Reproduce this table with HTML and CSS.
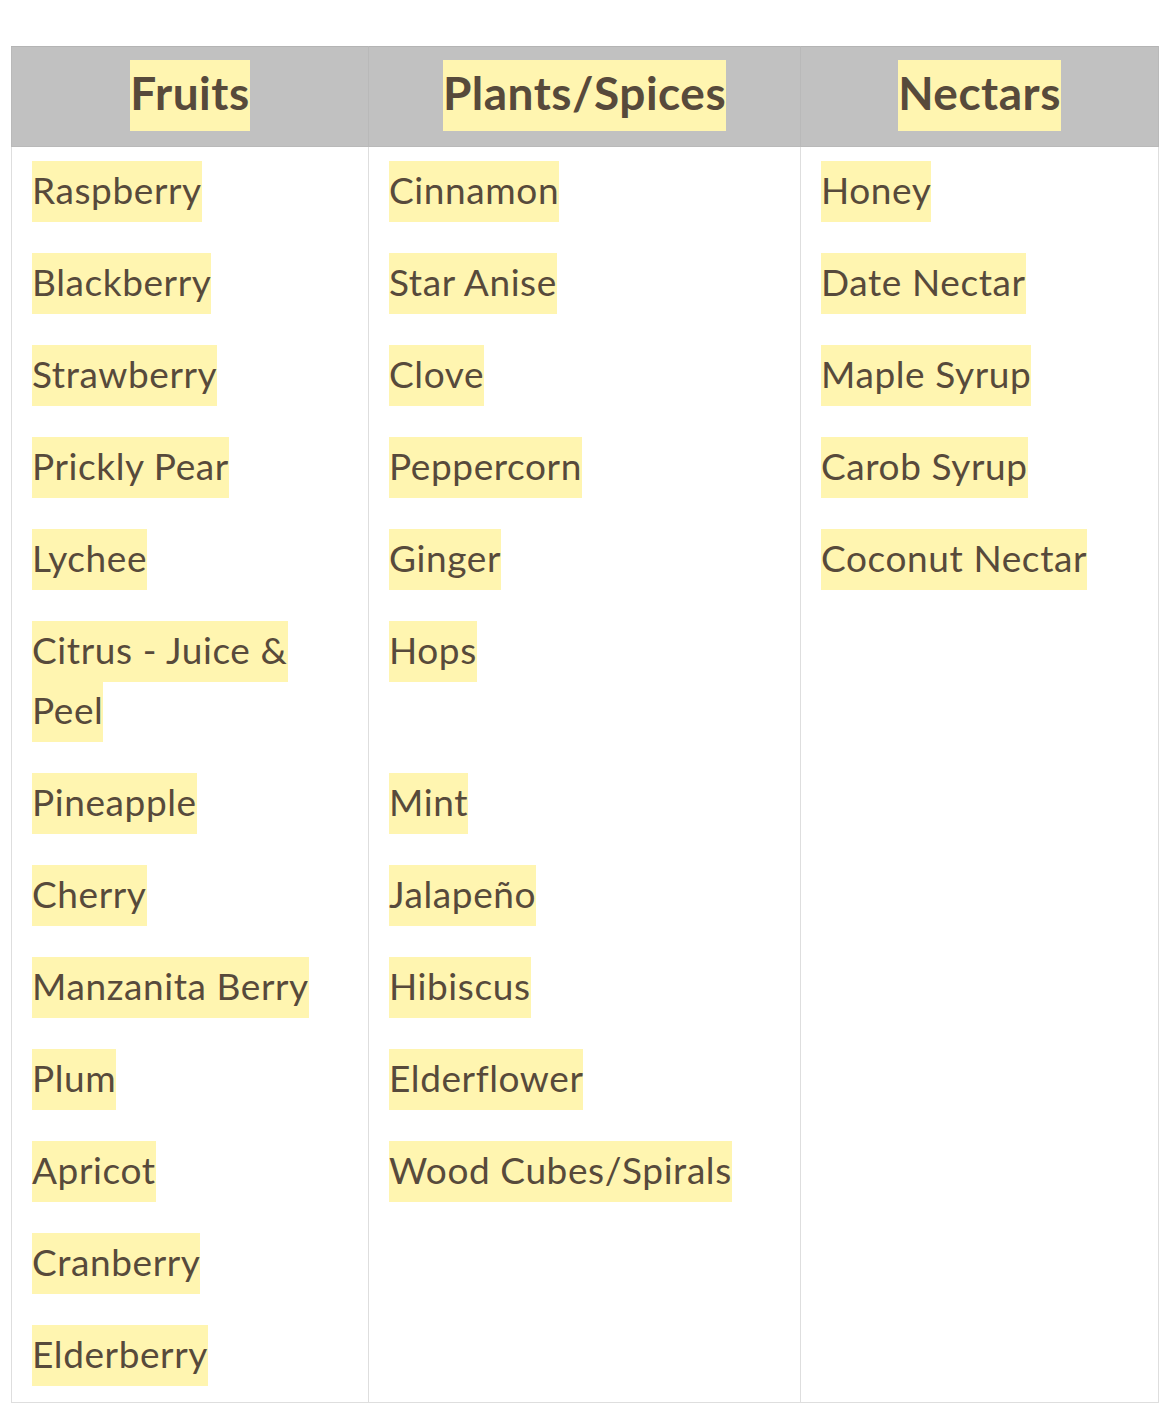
FILE: index.html
```html
<!DOCTYPE html>
<html>
<head>
<meta charset="utf-8">
<link rel="stylesheet" href="styles.css">
</head>
<body>
<table class="grid">
  <colgroup>
    <col class="c1"><col class="c2"><col class="c3">
  </colgroup>
  <thead>
    <tr><th><span class="hl">Fruits</span></th><th><span class="hl">Plants/Spices</span></th><th><span class="hl">Nectars</span></th></tr>
  </thead>
  <tbody>
    <tr><td><span class="hl">Raspberry</span></td><td><span class="hl">Cinnamon</span></td><td><span class="hl">Honey</span></td></tr>
    <tr><td><span class="hl">Blackberry</span></td><td><span class="hl">Star Anise</span></td><td><span class="hl">Date Nectar</span></td></tr>
    <tr><td><span class="hl">Strawberry</span></td><td><span class="hl">Clove</span></td><td><span class="hl">Maple Syrup</span></td></tr>
    <tr><td><span class="hl">Prickly Pear</span></td><td><span class="hl">Peppercorn</span></td><td><span class="hl">Carob Syrup</span></td></tr>
    <tr><td><span class="hl">Lychee</span></td><td><span class="hl">Ginger</span></td><td><span class="hl">Coconut Nectar</span></td></tr>
    <tr><td><span class="hl">Citrus - Juice &amp; Peel</span></td><td><span class="hl">Hops</span></td><td></td></tr>
    <tr><td><span class="hl">Pineapple</span></td><td><span class="hl">Mint</span></td><td></td></tr>
    <tr><td><span class="hl">Cherry</span></td><td><span class="hl">Jalapeño</span></td><td></td></tr>
    <tr><td><span class="hl">Manzanita Berry</span></td><td><span class="hl">Hibiscus</span></td><td></td></tr>
    <tr><td><span class="hl">Plum</span></td><td><span class="hl">Elderflower</span></td><td></td></tr>
    <tr><td><span class="hl">Apricot</span></td><td><span class="hl">Wood Cubes/Spirals</span></td><td></td></tr>
    <tr><td><span class="hl">Cranberry</span></td><td></td><td></td></tr>
    <tr><td><span class="hl">Elderberry</span></td><td></td><td></td></tr>
  </tbody>
</table>
</body>
</html>
```
FILE: styles.css
```css
html, body {
  margin: 0;
  padding: 0;
  background: #ffffff;
}

body {
  padding: 46px 11px 0 11px;
  font-family: "Lato", "Noto Sans", sans-serif;
  color: #574a3b;
}

.grid {
  border-collapse: collapse;
  table-layout: fixed;
  width: 1147px;
}

.c1 { width: 357px; }
.c2 { width: 432px; }
.c3 { width: 358px; }

.grid th {
  background: #c1c1c1;
  border: 1px solid #b9b9b9;
  border-top-color: #b4b4b4;
  padding: 10px 0 17px 0;
  text-align: center;
  font-size: 46px;
  font-weight: 700;
  line-height: 72px;
  letter-spacing: 0.5px;
  vertical-align: top;
}

.grid th .hl {
  padding: 5px 0 11px 0;
}

.grid td {
  border-left: 1px solid #dedede;
  border-right: 1px solid #dedede;
  border-top: 1px solid #ffffff;
  padding: 13px 20px 18px 20px;
  font-size: 37px;
  font-weight: 400;
  line-height: 60px;
  letter-spacing: 0.6px;
  vertical-align: top;
  text-align: left;
}

.grid tbody tr:last-child td {
  border-bottom: 1px solid #dedede;
}

.hl {
  background: #fff5b0;
  padding: 6px 0 10px 0;
  -webkit-box-decoration-break: clone;
  box-decoration-break: clone;
}
```
